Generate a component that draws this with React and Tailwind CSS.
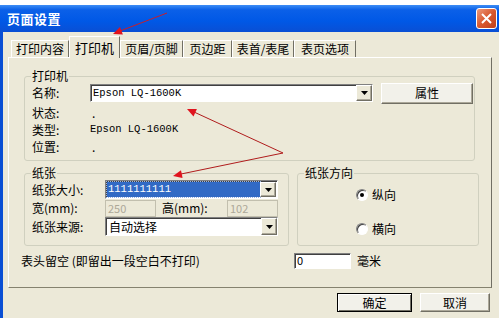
import React from "react";

function DropButton() {
  return (
    <div className="flex h-full w-[16px] items-center justify-center border border-white border-r-[#716f64] border-b-[#716f64] bg-[#ece9d8] shadow-[inset_-1px_-1px_0_#aca899]">
      <svg width="7" height="4" viewBox="0 0 7 4">
        <path d="M0 0h7L3.5 4z" fill="#000" />
      </svg>
    </div>
  );
}

function GroupBox({ title, className, bodyClass, children }) {
  return (
    <div className={`rounded-[3px] border border-[#d0d0bf] ${className}`}>
      <div className="-mt-[7px] ml-[6px] h-[12px] w-fit bg-[#ece9d8] px-[1px] leading-[12px]">
        {title}
      </div>
      <div className={bodyClass}>{children}</div>
    </div>
  );
}

function Radio({ checked, label, className }) {
  return (
    <div className={`flex items-center gap-[4px] ${className}`}>
      <div className="flex h-[12px] w-[12px] items-center justify-center rounded-full border border-[#808080] border-r-white border-b-white bg-white shadow-[inset_1px_1px_0_#404040]">
        {checked && <div className="h-[4px] w-[4px] rounded-full bg-black" />}
      </div>
      <span className="leading-none">{label}</span>
    </div>
  );
}

const tabs = [
  { name: "打印内容", w: "w-[58px]" },
  { name: "打印机", w: "w-[51px]", active: true },
  { name: "页眉/页脚", w: "w-[63px]" },
  { name: "页边距", w: "w-[49px]" },
  { name: "表首/表尾", w: "w-[62px]" },
  { name: "表页选项", w: "w-[62px]" },
];

export default function App() {
  return (
    <div className="relative h-[318px] w-[499px] overflow-hidden bg-white font-['Noto_Sans_CJK_SC',sans-serif] text-[12px] text-black">
      <div className="h-[5px] bg-white" />

      {/* title bar */}
      <div className="flex h-[27px] items-center justify-between bg-[linear-gradient(180deg,#3d8df5_0%,#0b60e8_18%,#0058e6_60%,#0a4fd4_100%)] pl-[7px] pr-[2px]">
        <span className="text-[13px] font-bold leading-none tracking-[0.5px] text-white">
          页面设置
        </span>
        <div className="flex h-[21px] w-[21px] items-center justify-center rounded-[3px] border border-white bg-[linear-gradient(135deg,#ec9a7c_0%,#d9582f_50%,#c0401a_100%)]">
          <svg width="11" height="11" viewBox="0 0 11 11">
            <path d="M1 1l9 9M10 1l-9 9" stroke="#fff" strokeWidth="2" />
          </svg>
        </div>
      </div>

      {/* body */}
      <div className="h-[286px] border-l-[3px] border-[#0a4fd4] bg-[#ece9d8]">
        {/* tabs */}
        <div className="flex h-[25px] items-end pl-[8px]">
          {tabs.map((t) =>
            t.active ? (
              <div
                key={t.name}
                className={`relative z-10 -mb-px flex h-[22px] ${t.w} items-center justify-center border-t border-l border-white border-r border-r-[#716f64] bg-[#ece9d8] text-[13px] leading-none`}
              >
                {t.name}
              </div>
            ) : (
              <div
                key={t.name}
                className={`flex h-[17px] ${t.w} items-center justify-center border-t border-l border-white border-r border-r-[#716f64] leading-none`}
              >
                {t.name}
              </div>
            )
          )}
        </div>

        {/* tab panel */}
        <div className="ml-[5px] h-[231px] w-[484px] border border-white border-r-[#716f64] border-b-[#85826f] pl-[15px]">
          <GroupBox
            title="打印机"
            className="mt-[18px] h-[85px] w-[451px]"
            bodyClass="pl-[7px]"
          >
            <div className="flex h-[22px] items-center">
              <span className="w-[58px] leading-none">名称:</span>
              <div className="flex h-[18px] w-[283px] items-center border border-[#808080] border-r-white border-b-white bg-white shadow-[inset_1px_1px_0_#404040]">
                <span className="flex-1 pl-[2px] font-['Liberation_Mono',monospace] text-[10.5px] leading-none">
                  Epson LQ-1600K
                </span>
                <DropButton />
              </div>
              <div className="ml-[8px] flex h-[21px] w-[92px] items-center justify-center border border-white border-r-[#716f64] border-b-[#716f64] bg-[#f2f1ea] leading-none shadow-[inset_-1px_-1px_0_#aca899]">
                属性
              </div>
            </div>
            <div className="flex h-[17px] items-center">
              <span className="w-[60px] leading-none">状态:</span>
              <span className="leading-none">.</span>
            </div>
            <div className="flex h-[17px] items-center">
              <span className="w-[58px] leading-none">类型:</span>
              <span className="font-['Liberation_Mono',monospace] text-[10.5px] leading-none">
                Epson LQ-1600K
              </span>
            </div>
            <div className="flex h-[17px] items-center">
              <span className="w-[60px] leading-none">位置:</span>
              <span className="leading-none">.</span>
            </div>
          </GroupBox>

          <div className="mt-[12px] flex gap-[8px]">
            <GroupBox
              title="纸张"
              className="h-[73px] w-[265px]"
              bodyClass="pl-[7px]"
            >
              <div className="mt-[1px] flex h-[19px] items-center">
                <span className="w-[73px] leading-none">纸张大小:</span>
                <div className="flex h-[19px] w-[173px] items-center border border-[#808080] border-r-white border-b-white bg-white p-[1px] shadow-[inset_1px_1px_0_#404040]">
                  <div className="flex h-full flex-1 items-center bg-[#316ac5] pl-[1px] outline outline-1 outline-dotted outline-[#9bb4e0]">
                    <span className="font-['Liberation_Mono',monospace] text-[10.5px] leading-none text-white">
                      1111111111
                    </span>
                  </div>
                  <DropButton />
                </div>
              </div>
              <div className="flex h-[18px] items-center">
                <span className="w-[73px] leading-none">宽(mm):</span>
                <div className="flex h-[17px] w-[51px] items-center border border-[#c2bfae] bg-[#ece9d8] pl-[2px] text-[11px] leading-none text-[#aca899]">
                  250
                </div>
                <span className="ml-[6px] w-[65px] leading-none">高(mm):</span>
                <div className="flex h-[17px] w-[51px] items-center border border-[#c2bfae] bg-[#ece9d8] pl-[2px] text-[11px] leading-none text-[#aca899]">
                  102
                </div>
              </div>
              <div className="flex h-[19px] items-center">
                <span className="w-[73px] leading-none">纸张来源:</span>
                <div className="flex h-[19px] w-[173px] items-center border border-[#808080] border-r-white border-b-white bg-white shadow-[inset_1px_1px_0_#404040]">
                  <span className="flex-1 pl-[3px] leading-none">自动选择</span>
                  <DropButton />
                </div>
              </div>
            </GroupBox>

            <GroupBox
              title="纸张方向"
              className="h-[73px] w-[182px]"
              bodyClass="pl-[58px]"
            >
              <Radio checked label="纵向" className="mt-[9px] h-[14px]" />
              <Radio label="横向" className="mt-[20px] h-[14px]" />
            </GroupBox>
          </div>

          <div className="mt-[6px] flex h-[17px] items-center">
            <span className="-ml-[3px] w-[273px] leading-none">
              表头留空 (即留出一段空白不打印)
            </span>
            <div className="flex h-[16px] w-[57px] items-center border border-[#808080] border-r-white border-b-white bg-white pl-[2px] text-[11px] leading-none shadow-[inset_1px_1px_0_#404040]">
              0
            </div>
            <span className="ml-[6px] leading-none">毫米</span>
          </div>
        </div>

        {/* buttons */}
        <div className="mt-[5px] flex justify-end gap-[8px] pr-[9px]">
          <div className="flex h-[19px] w-[75px] items-center justify-center border border-black bg-[#f2f1ea] leading-none shadow-[inset_1px_1px_0_#fff,inset_-1px_-1px_0_#716f64]">
            确定
          </div>
          <div className="flex h-[19px] w-[70px] items-center justify-center border border-white border-r-[#716f64] border-b-[#716f64] bg-[#f2f1ea] leading-none shadow-[inset_-1px_-1px_0_#aca899]">
            取消
          </div>
        </div>
      </div>

      {/* annotation arrows */}
      <svg
        className="pointer-events-none absolute left-0 top-0"
        width="499"
        height="318"
        viewBox="0 0 499 318"
      >
        <line x1="167" y1="13" x2="120" y2="31" stroke="#c81e2a" strokeWidth="1" />
        <polygon points="113,34 122.9,34.4 120,27" fill="#e0141e" />
        <line x1="283" y1="153" x2="194" y2="112" stroke="#b01c1c" strokeWidth="1" />
        <polygon points="187,109 196.9,109.1 193.5,116.4" fill="#e0141e" />
        <line x1="283" y1="153" x2="181" y2="174" stroke="#b01c1c" strokeWidth="1" />
        <polygon points="173,176 182.6,178.1 181,170.3" fill="#e0141e" />
      </svg>
    </div>
  );
}
